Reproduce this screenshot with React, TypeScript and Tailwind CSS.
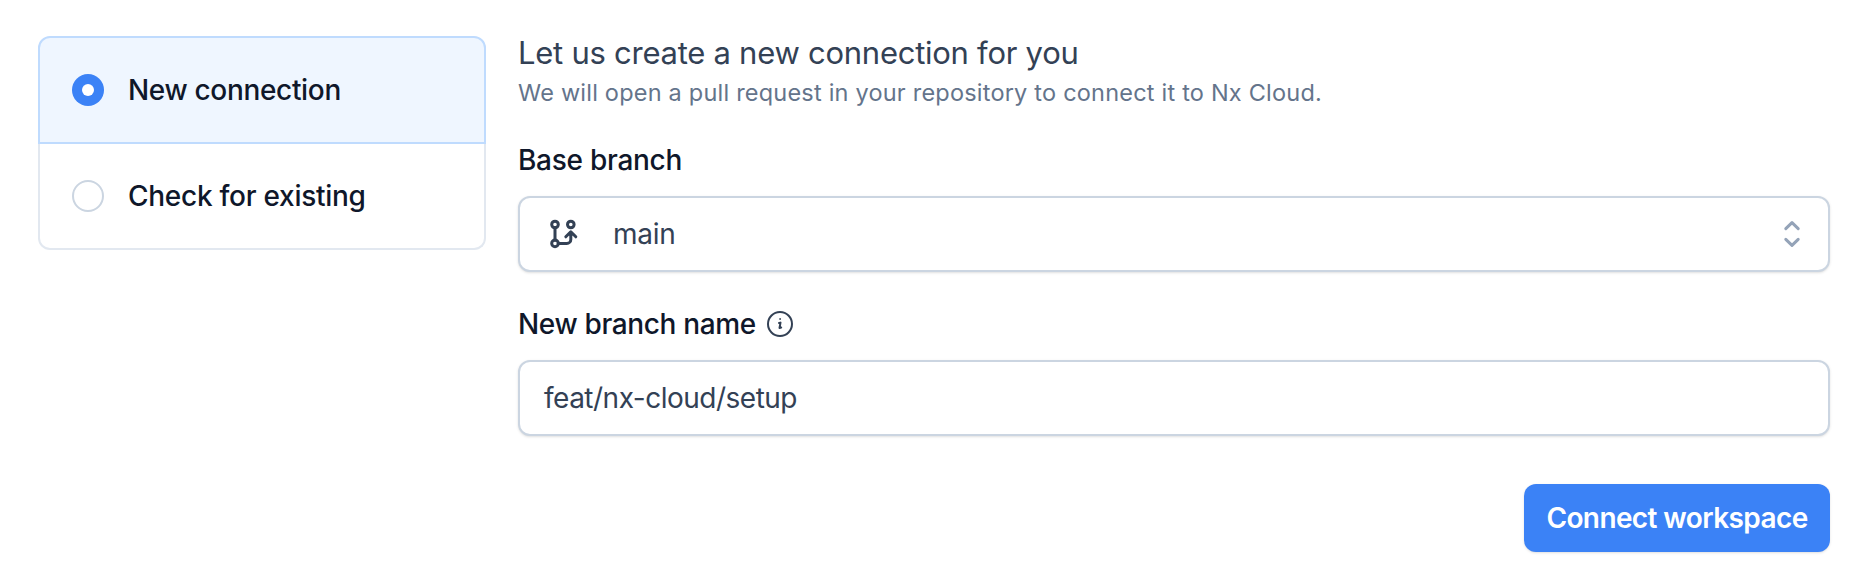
import React from 'react';

const FONT = "font-['Inter','Liberation_Sans',sans-serif]";

function BranchIcon() {
  return (
    <svg className="h-8 w-8 text-[#334155]" viewBox="0 0 32 32" fill="none" stroke="currentColor" strokeWidth="3" strokeLinecap="round" strokeLinejoin="round">
      <circle cx="7" cy="6.5" r="3.3" />
      <circle cx="22.8" cy="6.5" r="3.3" />
      <circle cx="7" cy="25.4" r="3.3" />
      <path d="M7 9.5v12.7M10.2 25.4h8.6a4 4 0 0 0 4-4v-7M17.8 18.8l5-5 5 5" />
    </svg>
  );
}

function InfoIcon() {
  return (
    <svg className="ml-2 h-8 w-8 text-[#334155]" viewBox="0 0 32 32" fill="none" stroke="currentColor" strokeWidth="2" strokeLinecap="round">
      <circle cx="16" cy="16" r="12" />
      <path d="M15 15l1.5-.4-1 5.4 1.7-.5" strokeWidth="2" strokeLinejoin="round" />
      <circle cx="16.1" cy="11" r="0.9" fill="currentColor" stroke="none" />
    </svg>
  );
}

function ChevronUpDown() {
  return (
    <svg className="h-8 w-8 text-[#94a3b8]" viewBox="0 0 32 32" fill="none" stroke="currentColor" strokeWidth="3" strokeLinecap="round" strokeLinejoin="round">
      <path d="M9.8 10.6l6.2-6 6.2 6M9.8 21.4l6.2 6 6.2-6" />
    </svg>
  );
}

export default function App() {
  return (
    <div className={`${FONT} flex h-[576px] w-[1864px] items-start gap-8 bg-white pt-9 pr-[34px] pl-[38px] text-[28px] leading-10 text-[#334155]`}>
      <div className="w-[448px] shrink-0 font-[550] text-[#0f172a]">
        <div className="flex h-[108px] items-center gap-6 rounded-t-xl border-2 border-[#bfdbfe] bg-[#eff6ff] pl-8">
          <span className="flex h-8 w-8 items-center justify-center rounded-full bg-[#3b82f6]">
            <span className="h-3 w-3 rounded-full bg-white" />
          </span>
          <span className="tracking-[-0.33px]">New connection</span>
        </div>
        <div className="flex h-[106px] items-center gap-6 rounded-b-xl border-2 border-t-0 border-[#e2e8f0] pl-8">
          <span className="h-8 w-8 rounded-full border-2 border-[#cbd5e1]" />
          <span className="tracking-[-0.27px]">Check for existing</span>
        </div>
      </div>
      <div className="flex grow flex-col">
        <h1 className="h-9 text-[31px] leading-[34px] tracking-[-0.26px]">Let us create a new connection for you</h1>
        <p className="h-10 text-[23.5px] leading-[41px] tracking-[0.21px] text-[#64748b]">We will open a pull request in your repository to connect it to Nx Cloud.</p>
        <div className="mt-7 h-10 font-[550] text-[#0f172a]">
          <span className="tracking-[-0.27px]">Base branch</span>
        </div>
        <div className="mt-4 flex h-[76px] items-center rounded-xl border-2 border-[#cbd5e1] bg-white pr-5 pl-7 shadow-sm">
          <BranchIcon />
          <span className="ml-[33px] grow tracking-[-0.3px]">main</span>
          <ChevronUpDown />
        </div>
        <div className="mt-8 flex h-10 items-center font-[550] text-[#0f172a]">
          <span className="tracking-[-0.35px]">New branch name</span>
          <InfoIcon />
        </div>
        <div className="mt-4 flex h-[76px] items-center rounded-xl border-2 border-[#cbd5e1] bg-white px-6 shadow-sm">
          <span className="tracking-[-0.5px]">feat/nx-cloud/setup</span>
        </div>
        <button className="mt-12 flex h-[68px] w-[306px] items-center justify-center self-end rounded-xl bg-[#3b82f6] font-[580] text-white shadow-sm">
          <span className="tracking-[-0.6px]">Connect workspace</span>
        </button>
      </div>
    </div>
  );
}
